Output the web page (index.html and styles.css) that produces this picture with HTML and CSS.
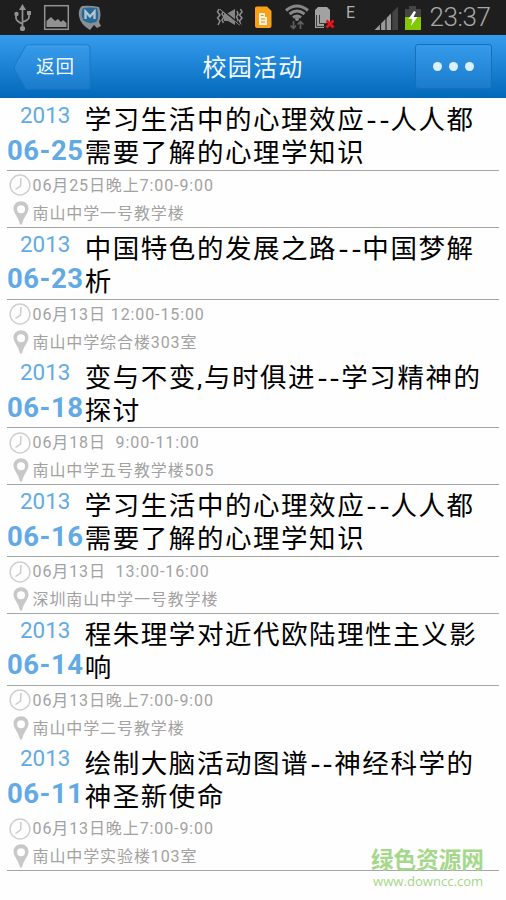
FILE: index.html
```html
<!DOCTYPE html>
<html lang="zh-CN">
<head>
<meta charset="utf-8">
<title>校园活动</title>
<link rel="stylesheet" href="styles.css">
</head>
<body>
<div class="status">
  <svg width="506" height="35" viewBox="0 0 506 35">
    <g fill="none" stroke="#929292" stroke-width="1.7">
      <path d="M22.500 7V28M16 14V18Q16 21 22.500 24M29 13V17Q29 20 22.500 22"/>
      <rect x="44.700" y="5.700" width="23.600" height="23.600" stroke-width="1.500"/>
    </g>
    <g fill="#929292">
      <path d="M22.500 4L26 10H19z"/><circle cx="22.500" cy="28.500" r="2.600"/><circle cx="16.500" cy="14" r="2.200"/><path d="M27 11h4v4h-4z"/>
      <path d="M46.500 27V21L51 17L55 21L58 19L61 22L63 20L66.500 23V27z"/>
    </g>
    <path d="M82 6Q90 5 99 7Q102 15 99 22L101 26L97 28L94 25L90 30Q80 24 79 16Q78 9 82 6z" fill="#8a8f94"/>
    <path d="M83 8Q90 7 97 8Q100 18 96 22Q88 25 83 20Q80 14 83 8z" fill="#266b99"/>
    <path d="M85.500 19V11.500L90 16.500L94.500 11.500V19" fill="none" stroke="#b5c5d0" stroke-width="2.300"/>
    <g stroke="#8e8e8e" fill="none" stroke-width="1.500">
      <path d="M219 9L217.500 12L220 15L217.500 18L220 21L218 25M223.500 11L222 14L224 17L222 20L223.500 23M240.500 9L242 12L239.500 15L242 18L239.500 21L241 25M237 11L238 14L236.500 17L238 20L236.500 23M220 9L240 25"/>
    </g>
    <path d="M224 13H228L235 9V25L228 21H224z" fill="#858585"/>
    <path d="M220 8L241 25" stroke="#1e1e1e" stroke-width="1.200"/>
    <path d="M255 8Q255 6.500 257 6.500H267L271.500 11V26Q271.500 28 269.500 28H257Q255 28 255 26z" fill="#f7a11b"/>
    <path d="M259 13H265V17H267V25H259z" fill="#fff2d8"/><path d="M261 15.500h2.500M261 19h4M261 22h4" stroke="#d58a19"/>
    <g fill="none" stroke="#878787" stroke-width="3"><path d="M286 10.500Q297 1.500 308 10.500M289.500 14Q297 8 304.500 14M293 17.500Q297 14.500 301 17.500"/></g>
    <circle cx="297" cy="19" r="2" fill="#878787"/>
    <path d="M293.500 21V28M290.500 25.500L293.500 28.500L296 25.500M300.500 29V22M297.500 24.500L300.500 21.500L303.500 24.500" stroke="#5f5f5f" stroke-width="1.700" fill="none"/>
    <path d="M318 7H327L330 10V23H324V28H315V10z" fill="#a2a2a2"/><path d="M316.500 15V26.500H325M319.500 15V23.500H326" fill="none" stroke="#3a3a3a"/>
    <path d="M326.500 20.500L333.500 27.500M333.500 20.500L326.500 27.500" stroke="#e8131b" stroke-width="2.800"/>
    <path d="M374.500 30L391.500 13V30z" fill="#999"/><path d="M391.500 13L398 6.500V30H391.500z" fill="#444"/>
    <path d="M380.500 22V30M386 17V30M391.700 12V30" stroke="#1e1e1e" stroke-width="1.200"/>
    <path d="M405 9H409V6H416V9H421V17H405z" fill="#454545"/><path d="M405 17H421V30H405z" fill="#84c900"/>
    <path d="M414 11L408.500 19H412.500L411 26L417.500 17H413.500L416 12z" fill="#fff"/>
    <text x="346" y="18" class="edge">E</text>
    <text x="429.500" y="26" class="clock" textLength="61.500">23:37</text>
  </svg>
</div>
<header class="bar">
  <div class="back">
    <svg class="back-shape" width="80" height="48" viewBox="0 0 80 48"><defs><linearGradient id="b" x1="0" y1="0" x2="0" y2="1"><stop offset="0" stop-color="#369bea"/><stop offset="1" stop-color="#1b7bcc"/></linearGradient></defs><path d="M14.500 2H74Q77 2 77 5V43Q77 46 74 46H14.500Q13 46 12 44L1.500 26Q1 24 2 22L12 4Q13 2 14.500 2z" fill="url(#b)" stroke="#1d79c4"/><path d="M14 3H75" stroke="#58aff0" stroke-opacity=".5"/></svg>
    <span class="back-label">返回</span>
  </div>
  <h1 class="heading">校园活动</h1>
  <div class="more"><i></i><i></i><i></i></div>
</header>
<svg class="defs" width="0" height="0">
  <symbol id="clock" viewBox="0 0 22 22"><circle cx="11" cy="11" r="9.900" fill="none" stroke="#d0d0d0" stroke-width="1.500"/><path d="M12 4L11.500 12L6.500 15.500" fill="none" stroke="#ccc" stroke-width="1.500"/></symbol>
  <symbol id="pin" viewBox="0 0 16 24"><path fill-rule="evenodd" fill="#c8c8c8" d="M8 .3C3.500 .3 .5 3.600 .5 7.700C.5 12 5.500 16 7 23.500H9C10.500 16 15.500 12 15.500 7.700C15.500 3.600 12.500 .3 8 .3zM8 4.200A4 4 0 1 1 8 12.200A4 4 0 1 1 8 4.200z"/></symbol>
</svg>
<main class="list">
  <article class="item">
    <div class="top"><div class="date"><span class="year">2013</span><b class="day">06-25</b></div><h2 class="title">学习生活中的心理效应<span class="dash"><i>-</i><i>-</i></span>人人都<br>需要了解的心理学知识</h2></div>
    <div class="meta"><svg class="clk"><use href="#clock"/></svg><span>06月25日晚上7:00-9:00</span></div>
    <div class="meta"><svg class="pin"><use href="#pin"/></svg><span>南山中学一号教学楼</span></div>
  </article>
  <article class="item open">
    <div class="top"><div class="date"><span class="year">2013</span><b class="day">06-23</b></div><h2 class="title">中国特色的发展之路<span class="dash"><i>-</i><i>-</i></span>中国梦解<br>析</h2></div>
    <div class="meta"><svg class="clk"><use href="#clock"/></svg><span>06月13日 12:00-15:00</span></div>
    <div class="meta"><svg class="pin"><use href="#pin"/></svg><span>南山中学综合楼303室</span></div>
  </article>
  <article class="item">
    <div class="top"><div class="date"><span class="year">2013</span><b class="day">06-18</b></div><h2 class="title">变与不变<span class="comma">,</span>与时俱进<span class="dash"><i>-</i><i>-</i></span>学习精神的<br>探讨</h2></div>
    <div class="meta"><svg class="clk"><use href="#clock"/></svg><span>06月18日  9:00-11:00</span></div>
    <div class="meta"><svg class="pin"><use href="#pin"/></svg><span>南山中学五号教学楼505</span></div>
  </article>
  <article class="item">
    <div class="top"><div class="date"><span class="year">2013</span><b class="day">06-16</b></div><h2 class="title">学习生活中的心理效应<span class="dash"><i>-</i><i>-</i></span>人人都<br>需要了解的心理学知识</h2></div>
    <div class="meta"><svg class="clk"><use href="#clock"/></svg><span>06月13日  13:00-16:00</span></div>
    <div class="meta"><svg class="pin"><use href="#pin"/></svg><span>深圳南山中学一号教学楼</span></div>
  </article>
  <article class="item open">
    <div class="top"><div class="date"><span class="year">2013</span><b class="day">06-14</b></div><h2 class="title">程朱理学对近代欧陆理性主义影<br>响</h2></div>
    <div class="meta"><svg class="clk"><use href="#clock"/></svg><span>06月13日晚上7:00-9:00</span></div>
    <div class="meta"><svg class="pin"><use href="#pin"/></svg><span>南山中学二号教学楼</span></div>
  </article>
  <article class="item plain">
    <div class="top"><div class="date"><span class="year">2013</span><b class="day">06-11</b></div><h2 class="title">绘制大脑活动图谱<span class="dash"><i>-</i><i>-</i></span>神经科学的<br>神圣新使命</h2></div>
    <div class="meta"><svg class="clk"><use href="#clock"/></svg><span>06月13日晚上7:00-9:00</span></div>
    <div class="meta"><svg class="pin"><use href="#pin"/></svg><span>南山中学实验楼103室</span></div>
  </article>
</main>
<div class="mark"><b class="mark-name">绿色资源网</b><span class="mark-url">www.downcc.com</span></div>
</body>
</html>
```
FILE: styles.css
```css
* { box-sizing: border-box; }
body {
  margin: 0;
  position: relative;
  width: 506px;
  height: 900px;
  overflow: hidden;
  background: #fefefe;
  font-family: Roboto, "Noto Sans CJK SC", sans-serif;
}
.status { height: 35px; background: #1e1e1e; }
.status svg { display: block; }
.edge { font: 16px Roboto, sans-serif; fill: #b0b0b0; }
.clock { font: 300 26px Roboto, sans-serif; fill: #a8a8a8; }
.bar {
  height: 63px;
  display: flex;
  align-items: center;
  justify-content: space-between;
  padding: 0 14px 0 13px;
  background: linear-gradient(#369ced, #0268ba);
  color: #f2faff;
}
.back { position: relative; width: 78px; height: 48px; display: flex; align-items: center; padding-left: 23px; }
.back-shape { position: absolute; left: 0; top: 0; }
.back-label { position: relative; font-size: 18.5px; letter-spacing: 1px; line-height: 28px; margin-top: 1px; white-space: nowrap; }
.heading { margin: 0; width: 190px; font-size: 24px; font-weight: 400; letter-spacing: 1.2px; text-align: center; line-height: 62px; padding-top: 2px; }
.more {
  width: 77px;
  height: 45px;
  display: flex;
  align-items: center;
  justify-content: center;
  gap: 7px;
  border: 1px solid #1670b9;
  border-radius: 3px;
  background: linear-gradient(#369bea, #1b7bcc);
}
.more i { width: 9px; height: 9px; border-radius: 50%; background: #dcefff; }
.defs { position: absolute; }
.list { padding: 1px 7px 0; }
.item { height: 128.7px; border-bottom: 1px solid #a6a6a6; }
.item.open { border-bottom-color: transparent; }
.top { height: 72px; display: flex; border-bottom: 1px solid #a6a6a6; }
.plain .top { border-bottom-color: transparent; }
.date { width: 77.7px; display: flex; flex-direction: column; color: #62aae6; }
.year { padding-left: 13px; font-size: 22.4px; line-height: 33.6px; }
.day { font-size: 27.5px; line-height: 35px; letter-spacing: .5px; white-space: nowrap; }
.title { margin: 0; padding-top: 4.4px; font-size: 26.5px; font-weight: 400; line-height: 33px; letter-spacing: 1.55px; color: #000; white-space: nowrap; }
.dash { display: inline-flex; width: 25.2px; justify-content: space-around; letter-spacing: 0; }
.dash i { font-style: normal; font-family: "Noto Sans", sans-serif; font-size: 28px; line-height: 30px; transform: scaleX(1.1); }
.comma { display: inline-block; width: 7px; }
.meta { height: 27.9px; display: flex; align-items: center; color: #a2a2a2; font-size: 16px; letter-spacing: .9px; white-space: pre; }
.meta span { line-height: 28px; padding-top: 2px; }
.clk { width: 22px; height: 22px; margin: 1px 1.5px 0 2px; flex: none; }
.pin { width: 16px; height: 24px; margin: 0 3.5px 0 6px; flex: none; }
.mark { position: absolute; left: 371px; top: 849px; color: #a5d88a; display: flex; flex-direction: column; }
.mark-name { font-size: 22.6px; line-height: 24px; }
.mark-url { padding-left: 2px; font: 13.1px/16px "Open Sans", sans-serif; }
```
